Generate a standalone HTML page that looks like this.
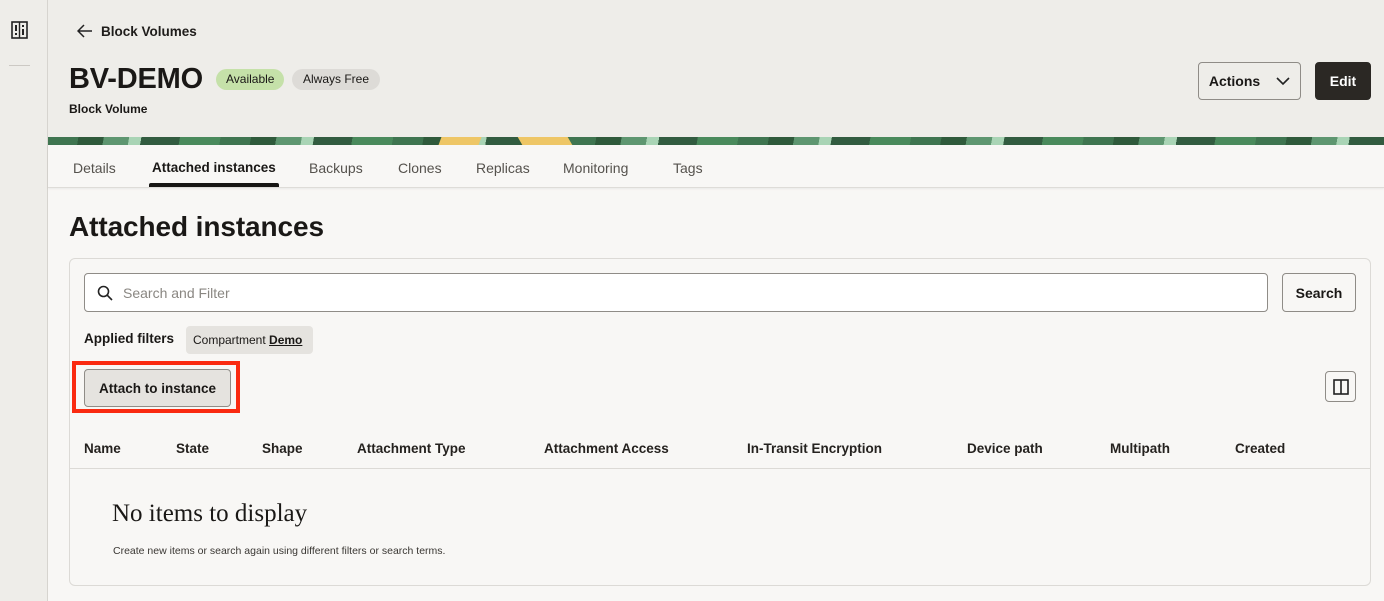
<!DOCTYPE html>
<html><head><meta charset="utf-8"><style>
*{box-sizing:border-box;margin:0;padding:0}
body{width:1384px;height:601px;overflow:hidden;background:#f8f7f5;font-family:"Liberation Sans",sans-serif;color:#1a1816;position:relative}
.abs{position:absolute}
.side{left:0;top:0;width:48px;height:601px;background:#eeede9;border-right:1px solid #d6d4cf}
.hdr{left:48px;top:0;width:1336px;height:137px;background:#eeede9}
.banner{left:48px;top:137px;width:1336px;height:8px;background:
repeating-linear-gradient(100deg,#3f7550 0 30px,#2f5a3b 30px 55px,#5e9670 55px 80px,#a9d4b5 80px 92px,#325c40 92px 130px,#4a8a5c 130px 170px)}
.tabs{left:48px;top:145px;width:1336px;height:43px;background:#f8f7f5;border-bottom:1px solid #dedcd8;box-shadow:0 1px 2px rgba(0,0,0,.06)}
.tab{top:160px;font-size:14px;color:#55524d}
.btn{border:1px solid #8f8c87;border-radius:4px;background:#f8f7f5;font-size:13.5px;font-weight:bold;display:flex;align-items:center;justify-content:center}
.col{top:441px;font-size:13.5px;font-weight:bold;color:#25221f}
</style></head><body>
<div class="abs side">
<svg class="abs" style="left:11px;top:21px" width="17" height="18" viewBox="0 0 17 18"><rect x="1" y="1" width="15" height="16" fill="none" stroke="#222" stroke-width="1.6"/><line x1="8.5" y1="1" x2="8.5" y2="17" stroke="#222" stroke-width="1.4"/><rect x="4" y="4" width="2" height="6" fill="#222"/><rect x="4" y="12" width="2" height="2" fill="#222"/><rect x="11" y="4" width="2" height="2" fill="#222"/><rect x="11" y="8" width="2" height="6" fill="#222"/></svg>
<div class="abs" style="left:9px;top:65px;width:21px;height:1px;background:#ccc9c4"></div>
</div>
<div class="abs hdr"></div>
<div class="abs" style="left:77px;top:24px;font-size:13.5px;font-weight:bold;color:#1f1d1b">
<svg width="16" height="14" viewBox="0 0 16 14" style="vertical-align:-2px;margin-right:8px"><path d="M15 7H2M7 1L1 7l6 6" fill="none" stroke="#222" stroke-width="1.5"/></svg>Block Volumes</div>
<div class="abs" style="left:69px;top:63px;font-size:29px;font-weight:bold;letter-spacing:-.2px">BV-DEMO</div>
<div class="abs" style="left:216px;top:69px;height:21px;padding:0 10px;border-radius:11px;background:#c5e1a9;font-size:12px;line-height:21px">Available</div>
<div class="abs" style="left:292px;top:69px;height:21px;padding:0 11px;border-radius:11px;background:#dddbd7;font-size:12px;line-height:21px">Always Free</div>
<div class="abs" style="left:69px;top:102px;font-size:12px;font-weight:bold">Block Volume</div>
<div class="abs btn" style="left:1198px;top:62px;width:103px;height:38px;background:#eeede9;font-size:14px">Actions<svg width="14" height="9" viewBox="0 0 14 9" style="margin-left:16px"><path d="M1 1l6 6 6-6" fill="none" stroke="#222" stroke-width="1.6"/></svg></div>
<div class="abs btn" style="left:1315px;top:62px;width:56px;height:38px;background:#2b2824;border-color:#2b2824;color:#fff;font-size:14px">Edit</div>
<div class="abs banner"></div>
<div class="abs" style="left:440px;top:137px;width:40px;height:8px;background:#eec666;transform:skewX(-20deg)"></div>
<div class="abs" style="left:520px;top:137px;width:50px;height:8px;background:#eec666;transform:skewX(30deg)"></div>
<div class="abs tabs"></div>
<div class="abs tab" style="left:73px">Details</div>
<div class="abs tab" style="left:152px;color:#1a1816;font-weight:bold;font-size:13.5px">Attached instances</div>
<div class="abs" style="left:149px;top:183px;width:130px;height:4px;background:#161513;border-radius:2px 2px 0 0"></div>
<div class="abs tab" style="left:309px">Backups</div>
<div class="abs tab" style="left:398px">Clones</div>
<div class="abs tab" style="left:476px">Replicas</div>
<div class="abs tab" style="left:563px">Monitoring</div>
<div class="abs tab" style="left:673px">Tags</div>
<div class="abs" style="left:69px;top:211px;font-size:28px;font-weight:bold;letter-spacing:-.1px">Attached instances</div>
<div class="abs" style="left:69px;top:258px;width:1302px;height:328px;border:1px solid #dcdad6;border-radius:6px;background:#f8f7f5"></div>
<div class="abs" style="left:84px;top:273px;width:1184px;height:39px;border:1px solid #8f8c87;border-radius:4px;background:#fff"></div>
<svg class="abs" style="left:97px;top:285px" width="16" height="16" viewBox="0 0 16 16"><circle cx="6.5" cy="6.5" r="5" fill="none" stroke="#222" stroke-width="1.6"/><path d="M10.2 10.2L15 15" stroke="#222" stroke-width="1.6"/></svg>
<div class="abs" style="left:123px;top:285px;font-size:14px;color:#8a8782">Search and Filter</div>
<div class="abs btn" style="left:1282px;top:273px;width:74px;height:39px;font-size:14px">Search</div>
<div class="abs" style="left:84px;top:331px;font-size:13.5px;font-weight:bold">Applied filters</div>
<div class="abs" style="left:186px;top:326px;width:127px;height:28px;background:#e5e3df;border-radius:4px;font-size:12px;line-height:28px;padding-left:7px">Compartment <b style="text-decoration:underline">Demo</b></div>
<div class="abs" style="left:72px;top:361px;width:168px;height:52px;border:4px solid #fa2a10"></div>
<div class="abs btn" style="left:84px;top:369px;width:147px;height:38px;background:#e5e3df">Attach to instance</div>
<div class="abs btn" style="left:1325px;top:371px;width:31px;height:31px"><svg width="16" height="16" viewBox="0 0 16 16"><rect x="1" y="1" width="14" height="14" fill="none" stroke="#222" stroke-width="1.6"/><line x1="8" y1="1" x2="8" y2="15" stroke="#222" stroke-width="1.6"/></svg></div>
<div class="abs col" style="left:84px">Name</div>
<div class="abs col" style="left:176px">State</div>
<div class="abs col" style="left:262px">Shape</div>
<div class="abs col" style="left:357px">Attachment Type</div>
<div class="abs col" style="left:544px">Attachment Access</div>
<div class="abs col" style="left:747px">In-Transit Encryption</div>
<div class="abs col" style="left:967px">Device path</div>
<div class="abs col" style="left:1110px">Multipath</div>
<div class="abs col" style="left:1235px">Created</div>
<div class="abs" style="left:70px;top:468px;width:1300px;height:1px;background:#dcdad6"></div>
<div class="abs" style="left:112px;top:500px;font-family:'Liberation Serif',serif;font-size:25px">No items to display</div>
<div class="abs" style="left:113px;top:545px;font-size:10.5px;color:#3a3733">Create new items or search again using different filters or search terms.</div>
</body></html>
